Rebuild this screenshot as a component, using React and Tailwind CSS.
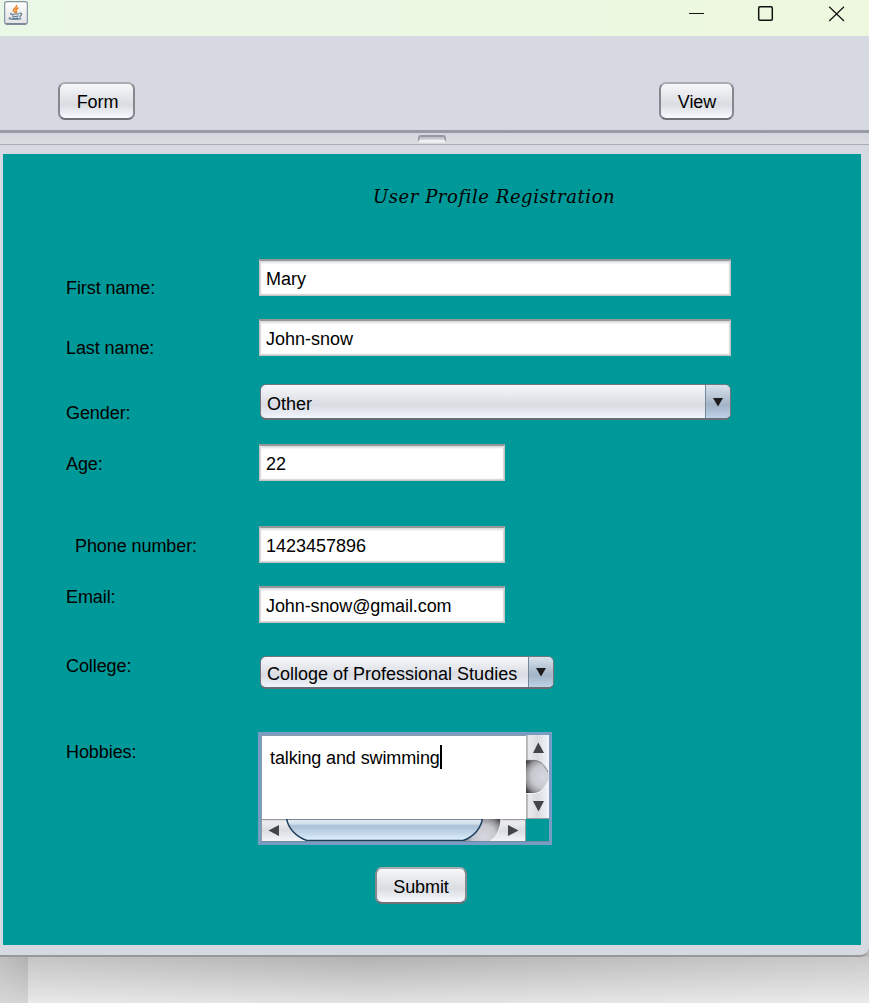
import React from 'react';

const FONT = "font-['Liberation_Sans',Arial,sans-serif]";

function Row({ className = '', label, labelClass, children }) {
  return (
    <div className={`flex items-start ${className}`}>
      <label className={`w-[193px] shrink-0 leading-6 tracking-[-0.08px] ${labelClass}`}>{label}</label>
      {children}
    </div>
  );
}

function Field({ value, className }) {
  return (
    <input
      defaultValue={value}
      className={`h-[37px] border border-[#c3c5c8] border-t-2 border-t-[#95979b] bg-white px-1.5 pt-[3px] leading-6 text-black shadow-[inset_0_3px_2px_-1px_#dcdde0,inset_1px_0_1px_#d8d8d8,inset_-1px_0_1px_#d8d8d8,inset_0_-1px_1px_#d8d8d8] outline-none ${className}`}
    />
  );
}

function Combo({ value, className, textClass, arrowClass }) {
  return (
    <div
      className={`flex items-stretch overflow-hidden rounded-[6px] border border-[#71767f] border-b-2 border-b-[#686e78] bg-gradient-to-b from-[#f8f8fb] via-[#d9dce2] via-60% to-[#f2f4fb] ${className}`}
    >
      <span className={`grow whitespace-nowrap pl-1.5 leading-6 ${textClass}`}>{value}</span>
      <span className={`flex shrink-0 justify-center border-l border-[#71869b] bg-gradient-to-b from-[#d9e2eb] via-[#a2b4c6] via-60% to-[#bfd3e7] ${arrowClass}`}>
        <svg width="10" height="9" viewBox="0 0 10 9"><path d="M0 0H10L5 8.5Z" fill="#1d1d1d" /></svg>
      </span>
    </div>
  );
}

function Button({ children, className }) {
  return (
    <button
      className={`flex justify-center rounded-[7px] border-2 border-[#85898f] border-t-[#a9acb1] border-b-[#6d7278] bg-gradient-to-b from-[#f8f8fa] via-[#d9dce1] via-60% to-[#f8faff] pt-[6px] leading-6 tracking-[-0.1px] text-black ${className}`}
    >
      {children}
    </button>
  );
}

function JavaIcon() {
  return (
    <svg width="24" height="24" viewBox="0 0 24 24" fill="none">
      <defs>
        <linearGradient id="tile" x1="0" y1="0" x2="0" y2="1">
          <stop stopColor="#fff" />
          <stop offset=".6" stopColor="#ececee" />
          <stop offset="1" stopColor="#e3e3e6" />
        </linearGradient>
      </defs>
      <rect x=".6" y=".6" width="22.8" height="22.4" rx="2.2" fill="url(#tile)" stroke="#8495a5" strokeWidth="1.2" />
      <path d="M2 23H22" stroke="#50657a" strokeWidth="1.2" />
      <path d="M12.5 4C13.6 7 8.8 7.4 9.4 9.4C9.6 10.3 11 10.8 11.2 12M14.6 6.8C12 8 11.3 8.8 12.3 10.1C12.7 10.7 12.3 11.4 11.9 11.9" stroke="#ec8426" strokeWidth="1.6" />
      <path d="M7.5 12.3C4.5 13.3 9 13.6 15.2 12.8M7.7 14.8C10 15.7 13 15.5 14.6 14.8M8.3 16.8C10 17.6 12.5 17.5 14 16.8M15.4 12.3C18.3 11.5 18.3 14.4 15.3 15.6M6.4 16.6C3 17.8 7 18.4 11 18.2C15 18.1 18 17.8 16.2 16.8" stroke="#57798f" strokeWidth="1.15" />
    </svg>
  );
}

function VerticalScrollbar() {
  return (
    <svg width="23" height="84" viewBox="0 0 23 84" className="block shrink-0">
      <defs>
        <linearGradient id="vtrack">
          <stop stopColor="#c9ccd1" />
          <stop offset=".13" stopColor="#e9eaed" />
          <stop offset=".5" stopColor="#d8dbe0" />
          <stop offset="1" stopColor="#f3f5fa" />
        </linearGradient>
        <radialGradient id="vwell" gradientUnits="userSpaceOnUse" cx="17" cy="41.5" r="23">
          <stop stopColor="#d6d7e0" />
          <stop offset=".5" stopColor="#c6c7ce" />
          <stop offset=".74" stopColor="#97979b" />
          <stop offset="1" stopColor="#2c2c2e" />
        </radialGradient>
      </defs>
      <rect width="23" height="84" fill="url(#vtrack)" />
      <path d="M1 25V0M1 58V84M0 83.5H23" stroke="#9b9da0" />
      <path d="M0 25H7C14 25 18 29 22.5 37V46C18 54 14 58 8 58H0Z" fill="url(#vwell)" />
      <path d="M0 25.4H7C14 25.4 18 29 22 37" fill="none" stroke="#77797d" strokeWidth=".8" />
      <path d="M0 58.5H8C14 58.5 18 54 22 46" fill="none" stroke="#f6f6f8" />
      <path d="M7 18L12.3 7.5L18 18ZM7 66H18L12.5 76.5Z" fill="#424447" />
    </svg>
  );
}

function HorizontalScrollbar() {
  return (
    <svg width="265" height="22" viewBox="0 0 265 22" className="block shrink-0">
      <defs>
        <linearGradient id="htrack" x1="0" y1="0" x2="0" y2="1">
          <stop stopColor="#d2d5da" />
          <stop offset=".15" stopColor="#ededf0" />
          <stop offset=".5" stopColor="#d9dce1" />
          <stop offset="1" stopColor="#f2f4f8" />
        </linearGradient>
        <linearGradient id="thumb" x1="0" y1="0" x2="0" y2="1">
          <stop stopColor="#e8edf2" />
          <stop offset=".22" stopColor="#d2dfe9" />
          <stop offset=".32" stopColor="#a9bfd4" />
          <stop offset=".7" stopColor="#c5daeb" />
          <stop offset="1" stopColor="#e4f4ff" />
        </linearGradient>
        <radialGradient id="hwell" gradientUnits="userSpaceOnUse" cx="223" cy="18" r="24">
          <stop stopColor="#d6d7e0" />
          <stop offset=".5" stopColor="#c6c7ce" />
          <stop offset=".75" stopColor="#929296" />
          <stop offset="1" stopColor="#3c3c3e" />
        </radialGradient>
      </defs>
      <rect width="265" height="22" fill="url(#htrack)" />
      <path d="M0 .5H265M.5 0V22M264.5 0V22" stroke="#96999c" />
      <path d="M220 0H240C239 11 237 17 229 22H200Z" fill="url(#hwell)" />
      <path d="M240 0C239 10 237 17 229 22" fill="none" stroke="#f5f5f7" />
      <path d="M25.7 0C27 9 35 18 46 21.5H202C213 18 220 9 221.3 0Z" fill="url(#thumb)" stroke="#1f3f5f" strokeWidth="1.5" />
      <path d="M27 .4H220" stroke="#7d8b98" />
      <path d="M18 6V17L7.5 11.5ZM247 6V17L257.5 11.5Z" fill="#424447" />
    </svg>
  );
}

function Hobbies() {
  return (
    <div className="-ml-px h-[113px] w-[294px] border-[3px] border-[#789dc5] bg-[#009999]">
      <div className="flex h-[107px] flex-col border-b border-[#718a9f]">
        <div className="flex h-[84px]">
          <div className="w-[265px] border-l border-t border-[#8b9ca9] bg-white pl-2 pt-[9px] leading-6">
            <span className="inline-block h-6 whitespace-nowrap border-r-2 border-black leading-[27px] tracking-[-0.12px]">talking and swimming</span>
          </div>
          <VerticalScrollbar />
        </div>
        <HorizontalScrollbar />
      </div>
    </div>
  );
}

export default function App() {
  return (
    <div className={`flex h-[1003px] w-[869px] flex-col overflow-hidden bg-[#d6d9e1] text-[18px] text-black ${FONT}`}>
      <header className="flex h-9 shrink-0 items-start justify-between bg-gradient-to-r from-[#eaf8e6] to-[#eef8df] pl-1 pt-px">
        <JavaIcon />
        <svg width="180" height="25" viewBox="689 1 180 25" fill="none" stroke="#111" strokeWidth="1.2">
          <path d="M689 13.5H704M829.2 6.7L844 21M844 6.7L829.2 21" />
          <rect x="758.7" y="6.7" width="13.6" height="13.6" rx="1.2" strokeWidth="1.5" />
        </svg>
      </header>

      <nav className="flex h-[94px] shrink-0 justify-between pl-[58px] pr-[135px] pt-[46px]">
        <Button className="h-[38px] w-[77px] pl-[2px]">Form</Button>
        <Button className="h-[38px] w-[75px] pl-px">View</Button>
      </nav>

      <div className="flex h-[15px] shrink-0 justify-center border-b border-t-[3px] border-b-[#a9acb4] border-t-[#989ba5] bg-gradient-to-b from-[#d3d6df] to-[#dadce1] pr-[5px] pt-[2px]">
        <svg width="28" height="8" viewBox="0 0 28 8" fill="none">
          <path d="M1 6V3Q1 1 3 1H25Q27 1 27 3V6" stroke="#9699a2" strokeWidth="1.8" />
          <path d="M3 3H25" stroke="#c1c4cc" strokeWidth="2" />
          <path d="M1 6.3H27" stroke="#f1f2f4" strokeWidth="2.4" />
        </svg>
      </div>

      <div className="h-[812px] shrink-0 bg-[#b9b9b9]">
        <div className="h-[812px] rounded-br-[9px] border-b-2 border-[#989898] bg-[#d6d9e1] pl-[3px] pt-[9px]">
          <main className="h-[791px] w-[858px] bg-[#009999] pl-[63px] pt-[30px]">
            <h1 className="ml-[307px] h-[26px] whitespace-nowrap font-['Lucida_Calligraphy','DejaVu_Serif',serif] text-[18px] italic leading-[26px] tracking-[0.56px]">
              User Profile Registration
            </h1>
            <Row className="mt-[50px] h-9" label="First name:" labelClass="pt-4">
              <Field value="Mary" className="-mt-px w-[472px]" />
            </Row>
            <Row className="mt-6 h-9" label="Last name:" labelClass="pt-4">
              <Field value="John-snow" className="-mt-px w-[472px]" />
            </Row>
            <Row className="mt-7 h-9" label="Gender:" labelClass="pt-[17px]">
              <Combo value="Other" className="ml-px h-9 w-[471px]" textClass="pt-[7px]" arrowClass="w-[25px] pt-[13px]" />
            </Row>
            <Row className="mt-[25px] h-9" label="Age:" labelClass="pt-[7px]">
              <Field value="22" className="-mt-px w-[246px]" />
            </Row>
            <Row className="mt-[46px] h-9" label="Phone number:" labelClass="pl-[9px] pt-[7px]">
              <Field value="1423457896" className="-mt-px w-[246px]" />
            </Row>
            <Row className="mt-[22px] h-[38px]" label="Email:" labelClass="">
              <Field value="John-snow@gmail.com" className="mt-px w-[246px] tracking-[-0.1px]" />
            </Row>
            <Row className="mt-[31px] h-[35px]" label="College:" labelClass="">
              <Combo value="Colloge of Professional Studies" className="ml-px mt-[2px] h-[33px] w-[294px]" textClass="pt-[5px]" arrowClass="w-[25px] pt-[11px]" />
            </Row>
            <Row className="mt-[43px] h-[113px]" label="Hobbies:" labelClass="pt-2">
              <Hobbies />
            </Row>
            <Button className="ml-[309px] mt-[22px] h-[37px] w-[92px]">Submit</Button>
          </main>
        </div>
      </div>

      <footer className="flex h-[46px] shrink-0 bg-gradient-to-b from-[#b2b2b2] to-[#e2e2e2]">
        <div className="w-7 bg-gradient-to-r from-[#ccc]/50 to-[#aaa]/25" />
        <div className="grow bg-gradient-to-r from-white/25 via-transparent via-40% to-white/30" />
      </footer>
    </div>
  );
}
